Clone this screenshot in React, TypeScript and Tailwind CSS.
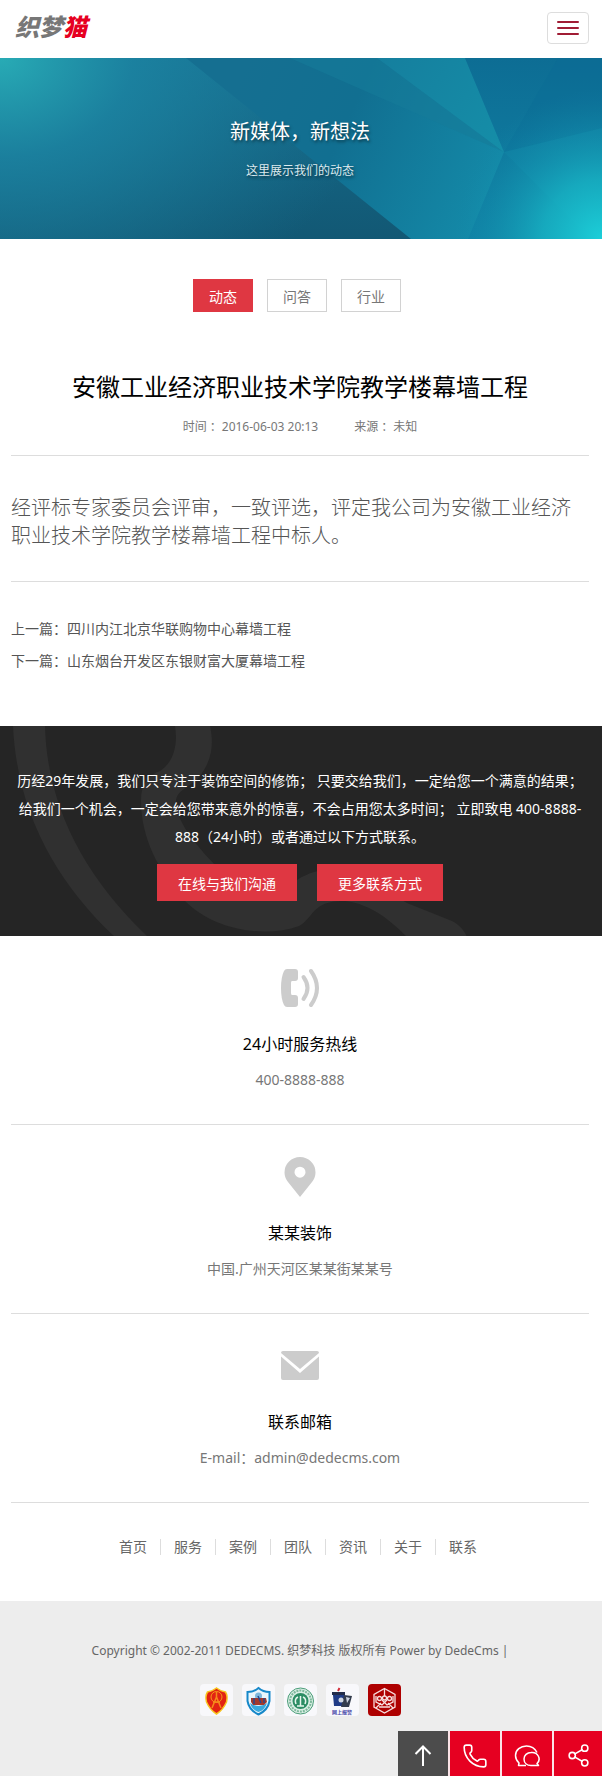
import type { ReactNode } from 'react';
import { Phone, Share2 } from 'lucide-react';

const tabs = ['动态', '问答', '行业'];
const navItems = ['首页', '服务', '案例', '团队', '资讯', '关于', '联系'];

function Header() {
  return (
    <header className="flex h-[58px] items-center justify-between bg-white pr-[13px] pl-[15px]">
      <a
        href="#"
        aria-label="织梦猫"
        className="-mt-1 text-2xl leading-8 font-black text-[#777] italic"
      >
        织梦<span className="text-[#e60021]">猫</span>
      </a>
      <button
        type="button"
        aria-label="菜单"
        className="-mt-[2px] flex h-8 w-[42px] flex-col items-center justify-center gap-1 rounded border border-[#ddd]"
      >
        <span className="h-[2px] w-[22px] rounded-[1px] bg-[#a01c34]" />
        <span className="h-[2px] w-[22px] rounded-[1px] bg-[#a01c34]" />
        <span className="h-[2px] w-[22px] rounded-[1px] bg-[#a01c34]" />
      </button>
    </header>
  );
}

function BannerArt() {
  return (
    <svg
      viewBox="0 0 602 181"
      preserveAspectRatio="xMidYMid slice"
      className="absolute inset-0 h-full w-full"
      aria-hidden="true"
    >
      <defs>
        <linearGradient id="base" x1="0" y1="0" x2="0" y2="1">
          <stop offset="0" stopColor="#166f90" />
          <stop offset="1" stopColor="#125874" />
        </linearGradient>
        <radialGradient id="leftGlow" gradientUnits="userSpaceOnUse" cx="0" cy="0" r="380" gradientTransform="scale(1 0.75)">
          <stop offset="0" stopColor="#28abb5" />
          <stop offset="0.35" stopColor="#1c84a2" stopOpacity="0.85" />
          <stop offset="1" stopColor="#1a7898" stopOpacity="0" />
        </radialGradient>
        <linearGradient id="midPlane" gradientUnits="userSpaceOnUse" x1="240" y1="20" x2="500" y2="140">
          <stop offset="0" stopColor="#156f91" />
          <stop offset="0.4" stopColor="#116f91" />
          <stop offset="1" stopColor="#148ba9" />
        </linearGradient>
        <linearGradient id="facet" gradientUnits="userSpaceOnUse" x1="377" y1="0" x2="504" y2="94">
          <stop offset="0" stopColor="#157f9e" />
          <stop offset="1" stopColor="#158ea8" />
        </linearGradient>
        <linearGradient id="rightPlane" gradientUnits="userSpaceOnUse" x1="540" y1="0" x2="540" y2="181">
          <stop offset="0" stopColor="#0d6d94" />
          <stop offset="1" stopColor="#1082a5" />
        </linearGradient>
        <radialGradient id="rightGlow" gradientUnits="userSpaceOnUse" cx="602" cy="181" r="150">
          <stop offset="0" stopColor="#1ccfd9" />
          <stop offset="0.4" stopColor="#18b6c6" stopOpacity="0.75" />
          <stop offset="1" stopColor="#1285a6" stopOpacity="0" />
        </radialGradient>
      </defs>
      <rect width="602" height="181" fill="url(#base)" />
      <rect width="602" height="181" fill="url(#leftGlow)" />
      <path d="M186 0L411 181H602V0Z" fill="url(#midPlane)" />
      <path d="M290 0L504 94L377 0Z" fill="#167c9a" opacity="0.6" />
      <path d="M377 0L504 94L465 0Z" fill="url(#facet)" />
      <path d="M465 0L504 94L468 181H602V0Z" fill="url(#rightPlane)" />
      <path d="M558 0L504 94L602 70V0Z" fill="#0a6a95" opacity="0.3" />
      <path d="M504 94L602 70V181H590Z" fill="#1591b0" opacity="0.25" />
      <rect width="602" height="181" fill="url(#rightGlow)" />
    </svg>
  );
}

function Banner() {
  return (
    <section className="relative overflow-hidden bg-[#14607f] pt-[60px] pr-[13px] pb-[59px] pl-[11px] text-center text-white">
      <BannerArt />
      <div className="relative [text-shadow:1px_2px_3px_rgba(0,0,0,0.5)]">
        <h2 className="text-xl leading-7">新媒体，新想法</h2>
        <p className="mt-4 text-xs leading-[18px] text-[#dcebf0]">这里展示我们的动态</p>
      </div>
    </section>
  );
}

function Article() {
  return (
    <main className="pt-10 pr-[13px] pb-[49px] pl-[11px]">
      <nav className="flex justify-center gap-[14px] pr-[6px] text-sm">
        {tabs.map((tab, i) => (
          <a
            key={tab}
            href="#"
            className={
              i === 0
                ? 'flex h-[33px] w-[60px] items-center justify-center border border-[#df3742] bg-[#df3742] pt-[2px] text-white'
                : 'flex h-[33px] w-[60px] items-center justify-center border border-[#d2d2d2] pt-[2px] text-[#777]'
            }
          >
            {tab}
          </a>
        ))}
      </nav>
      <h1 className="mt-[59px] text-center text-2xl leading-8 text-black">
        安徽工业经济职业技术学院教学楼幕墙工程
      </h1>
      <div className="mt-[14px] flex justify-center gap-9 border-b border-[#ddd] pb-[18px] text-xs leading-5 text-[#777]">
        <span>时间 ：2016-06-03 20:13</span>
        <span>来源 ：未知</span>
      </div>
      <div className="border-b border-[#ddd] pt-[38px] pb-[31px] text-xl leading-7 font-light text-[#555]">
        <p>经评标专家委员会评审，一致评选，评定我公司为安徽工业经济职业技术学院教学楼幕墙工程中标人。</p>
      </div>
      <div className="mt-[31px] text-sm leading-8 text-[#555]">
        <p>
          上一篇：<a href="#">四川内江北京华联购物中心幕墙工程</a>
        </p>
        <p>
          下一篇：<a href="#">山东烟台开发区东银财富大厦幕墙工程</a>
        </p>
      </div>
    </main>
  );
}

function CallToAction() {
  return (
    <section className="relative overflow-hidden bg-[#252525] pt-[41px] pr-[13px] pb-[35px] pl-[11px] text-center text-sm text-white">
      <svg className="absolute top-0 left-0 h-[211px] w-[602px]" viewBox="0 0 602 211" fill="#303030" aria-hidden="true">
        <path d="M13 0H45C47 78 82 148 148 211H115C55 155 17 85 13 0Z" />
        <path d="M175 0H210C214 18 212 34 200 50C192 60 178 63 176 74C174 100 212 136 230 154C256 180 281 163 297 154C316 141 345 138 366 153L407 177L452 195C460 199 465 206 467 211H407C392 196 372 178 345 175C312 174 314 192 299 200C266 212 214 205 184 174C158 144 141 112 141 74C141 59 148 49 160 45C174 36 178 18 175 0Z" />
      </svg>
      <div className="relative">
        <p className="leading-7">
          历经29年发展，我们只专注于装饰空间的修饰； 只要交给我们，一定给您一个满意的结果；
          给我们一个机会，一定会给您带来意外的惊喜，不会占用您太多时间； 立即致电
          400-8888-888（24小时）或者通过以下方式联系。
        </p>
        <div className="mt-[13px] flex justify-center gap-5">
          <a href="#" className="bg-[#df3742] px-[21px] pt-[10px] pb-[7px] leading-5">
            在线与我们沟通
          </a>
          <a href="#" className="bg-[#df3742] px-[21px] pt-[10px] pb-[7px] leading-5">
            更多联系方式
          </a>
        </div>
      </div>
    </section>
  );
}

interface ContactProps {
  icon: ReactNode;
  title: string;
  text: string;
}

function Contact({ icon, title, text }: ContactProps) {
  return (
    <div className="flex flex-col items-center border-b border-[#ddd] pt-8 pb-[34px]">
      <svg width="40" height="40" viewBox="0 0 40 40" fill="#ccc" aria-hidden="true">
        {icon}
      </svg>
      <h3 className="mt-6 text-base leading-6 text-black">{title}</h3>
      <p className="mt-[14px] text-sm leading-5 text-[#777]">{text}</p>
    </div>
  );
}

function Contacts() {
  return (
    <section className="pr-[13px] pl-[11px]">
      <Contact
        title="24小时服务热线"
        text="400-8888-888"
        icon={
          <>
            <path d="M7 1H15Q18 1 18 4V10Q18 13 15 13H12Q11 13 11 15V25Q11 27 12 27H15Q18 27 18 30V36Q18 39 15 39H7Q5 39 4 37Q1 31 1 20Q1 9 4 3Q5 1 7 1Z" />
            <g fill="none" stroke="#ccc" strokeWidth="4" strokeLinecap="round">
              <path d="M23.500 9Q31.500 20 23.500 31" />
              <path d="M31 3Q43 20 31 37" />
            </g>
          </>
        }
      />
      <Contact
        title="某某装饰"
        text="中国.广州天河区某某街某某号"
        icon={
          <path
            fillRule="evenodd"
            d="M20 0A15.500 15.500 0 0 0 4.500 15.500C4.500 19.500 6 22.500 8 25L20 40L32 25C34 22.500 35.500 19.500 35.500 15.500A15.500 15.500 0 0 0 20 0ZM20 9.700A5.500 5.500 0 1 1 20 20.700A5.500 5.500 0 0 1 20 9.700Z"
          />
        }
      />
      <Contact
        title="联系邮箱"
        text="E-mail：admin@dedecms.com"
        icon={
          <>
            <path d="M1 7Q1 5 3 5H37Q39 5 39 7L20 23Z" />
            <path d="M1 10.500L20 27L39 10.500V32Q39 34 37 34H3Q1 34 1 32Z" />
          </>
        }
      />
    </section>
  );
}

function Badges() {
  return (
    <div className="mt-[23px] flex justify-center gap-[9px]" aria-hidden="true">
      <svg width="33" height="32" viewBox="0 0 33 32">
        <rect width="33" height="32" rx="4" fill="#f8f8fb" />
        <path d="M16.500 4Q20 7 25.500 8Q28 12 26.500 18Q23 26 16.500 30Q10 26 6.500 18Q5 12 7.500 8Q13 7 16.500 4Z" fill="#e22313" stroke="#f8c520" strokeWidth="1.500" />
        <circle cx="16.500" cy="13" r="5.500" fill="none" stroke="#f59a1b" />
        <path d="M16.500 8V14M12 24L16.500 13L21 24M13 18H20" fill="none" stroke="#f58a1b" strokeWidth="1.500" />
      </svg>
      <svg width="33" height="32" viewBox="0 0 33 32">
        <rect width="33" height="32" rx="4" fill="#f8f8fb" />
        <path d="M16.500 4Q21 8 27.500 8V17Q26 26 16.500 30.500Q7 26 5.500 17V8Q12 8 16.500 4Z" fill="#eaf6fc" stroke="#1688c9" strokeWidth="2" />
        <path d="M8 19Q17 25 25 19Q23 26 16.500 28Q10 26 8 19Z" fill="#39a9dc" />
        <circle cx="16.500" cy="12" r="3.500" fill="#7fb7dc" />
        <path d="M9 14H24L25 18L22 21H11L9 18Z" fill="#a33a2c" />
        <path d="M12 14V20M16 12L19 19M22 14V19" stroke="#294a8d" strokeWidth="1.500" />
      </svg>
      <svg width="33" height="32" viewBox="0 0 33 32">
        <rect width="33" height="32" rx="4" fill="#f8f8fb" />
        <circle cx="16.500" cy="17" r="13" fill="#dcefe6" stroke="#4a9d78" />
        <circle cx="16.500" cy="17" r="10.500" fill="none" stroke="#7db99c" strokeWidth="2" strokeDasharray="2 1" />
        <circle cx="16.500" cy="17" r="8" fill="#2c8d64" />
        <path d="M12 20Q10 15 14 13M21 20Q23 15 19 13M16.500 12V22M13 22H20" fill="none" stroke="#e7f6ee" strokeWidth="1.500" />
      </svg>
      <svg width="33" height="32" viewBox="0 0 33 32">
        <rect width="33" height="32" rx="4" fill="#f8f8fb" />
        <path d="M12 7L13.500 4" stroke="#d42b36" strokeWidth="2" />
        <path d="M6 8H19V11H6Z" fill="#222c4a" />
        <path d="M7 11H19L18 22H8Z" fill="#1f3b86" />
        <path d="M18 11L26 12L23 23H15Z" fill="#333c4d" />
        <path d="M20 13L24 14L21 19Z" fill="#cfd6e2" />
        <circle cx="15" cy="16" r="2.500" fill="#cfd6e2" />
        <text x="16" y="29.500" fontSize="5" fontWeight="700" textAnchor="middle" fill="#4747a8">
          网上报警
        </text>
      </svg>
      <svg width="33" height="32" viewBox="0 0 33 32">
        <rect width="33" height="32" rx="4" fill="#ae0000" />
        <g fill="none" stroke="#f7dede" strokeWidth="1.300">
          <path d="M16.500 4.500L27 10.500V23L16.500 29L6 23V10.500Z" />
          <path d="M16.500 5V12M8 12V18L14 21L19 16M25 12V18L19 21L14 16M8 24L13 19M25 24L20 19M11 23H22" />
          <circle cx="11.500" cy="14.500" r="2" />
          <circle cx="16.500" cy="14" r="2" />
          <circle cx="21.500" cy="14.500" r="2" />
        </g>
      </svg>
    </div>
  );
}

function Footer() {
  return (
    <>
      <nav className="mb-11 flex justify-center pt-[34px] pr-[6px] text-sm leading-5 text-[#666]">
        {navItems.map((item, i) => (
          <div key={item} className="flex items-center">
            {i > 0 && <span className="h-4 w-px bg-[#ddd]" />}
            <a href="#" className="px-[13px]">
              {item}
            </a>
          </div>
        ))}
      </nav>
      <footer className="bg-[#ededed] pt-10 pr-[13px] pb-[60px] pl-[11px] text-center text-xs leading-5 text-[#666]">
        <p>Copyright © 2002-2011 DEDECMS. 织梦科技 版权所有 Power by DedeCms |</p>
        <Badges />
      </footer>
    </>
  );
}

function QuickBar() {
  return (
    <div className="fixed right-0 bottom-0 flex h-[45px] gap-[2px] bg-[#fbe3e7] text-white">
      <button type="button" aria-label="返回顶部" className="flex w-[50px] items-center justify-center bg-[#4c4c4c] pt-1">
        <svg width="20" height="22" viewBox="0 0 20 22" fill="none" stroke="currentColor" strokeWidth="2">
          <path d="M10 21V2M2.500 9L10 1.500L17.500 9" />
        </svg>
      </button>
      <a href="#" aria-label="电话" className="flex w-[50px] items-center justify-center bg-[#e60021] pt-1">
        <Phone size={26} strokeWidth={1.5} />
      </a>
      <a href="#" aria-label="在线咨询" className="flex w-[50px] items-center justify-center bg-[#e60021] pt-1">
        <svg width="26" height="24" viewBox="0 0 26 24" fill="none" stroke="currentColor" strokeWidth="1.500" strokeLinejoin="round">
          <path d="M23 8.500C21 4.500 17 2 12.500 2C6.500 2 1.500 6 1.500 11.500C1.500 14.500 3 17 5 19L4.500 21.500H12" />
          <path d="M17 8.500A7 6.500 0 0 0 10 15C10 19 13 21.500 17 21.500H24.500L23 19.500A7 6.500 0 0 0 17 8.500Z" />
        </svg>
      </a>
      <button type="button" aria-label="分享" className="flex w-12 items-center justify-center bg-[#e60021] pt-1">
        <Share2 size={25} strokeWidth={1.5} />
      </button>
    </div>
  );
}

export default function App() {
  return (
    <div
      lang="zh-CN"
      className="min-h-screen bg-white font-['Noto_Sans','Noto_Sans_CJK_SC',sans-serif]"
    >
      <Header />
      <Banner />
      <Article />
      <CallToAction />
      <Contacts />
      <Footer />
      <QuickBar />
    </div>
  );
}
